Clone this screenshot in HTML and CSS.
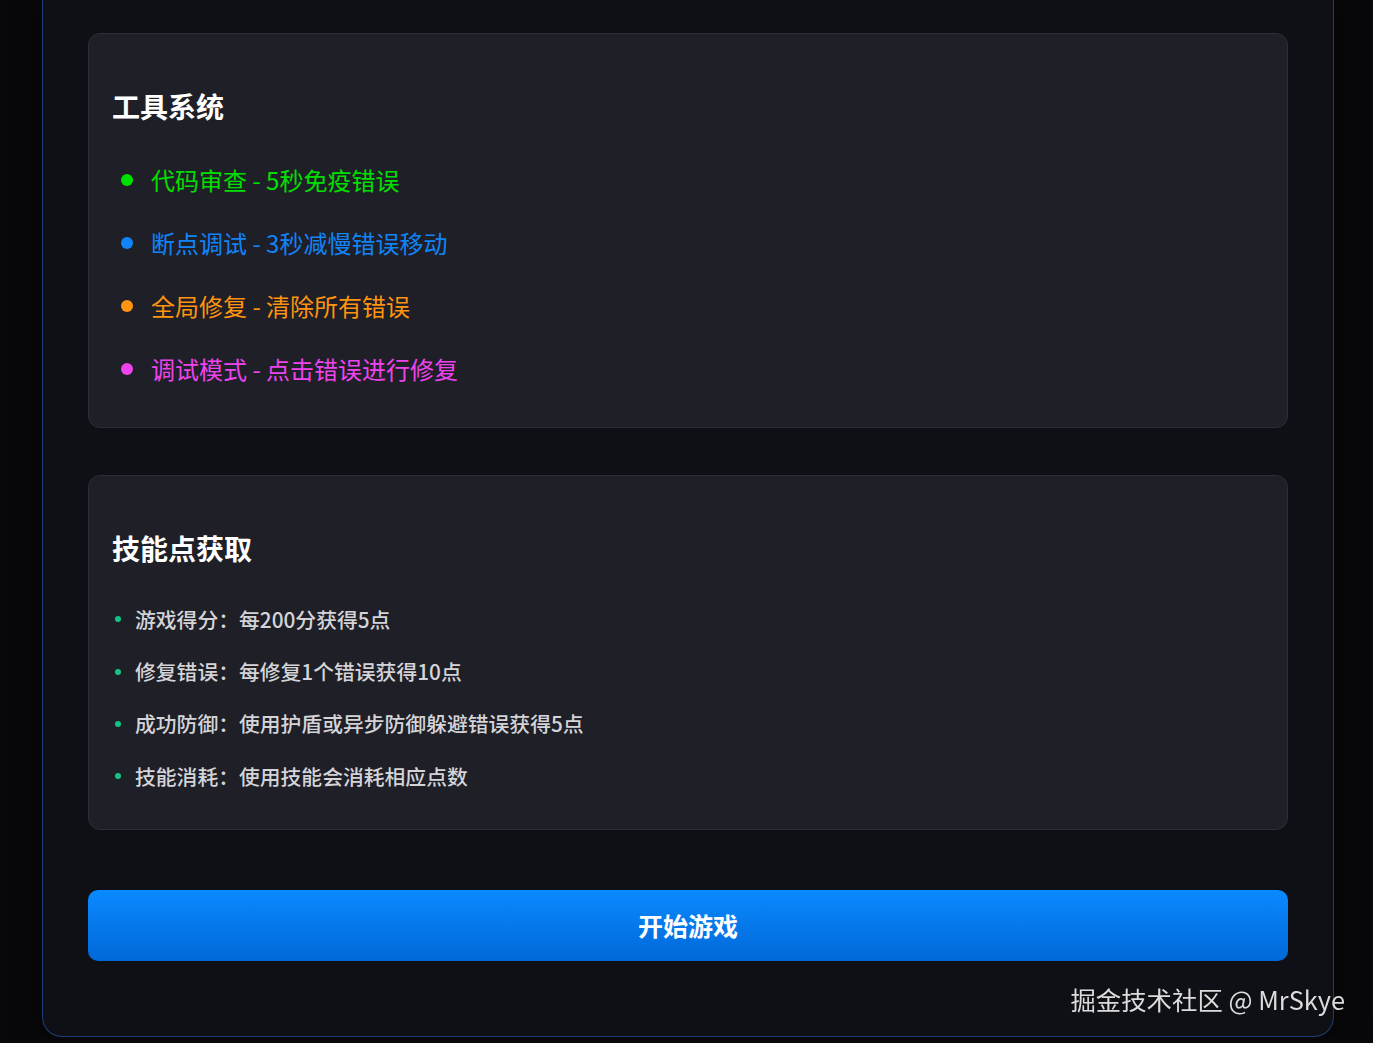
FILE: index.html
```html
<!DOCTYPE html>
<html lang="zh-CN">
<head>
    <meta charset="UTF-8">
    <meta name="viewport" content="width=device-width, initial-scale=1.0">
    <title>调试大作战</title>

    <link rel="stylesheet" href="styles.css">
</head>
<body>
    <div class="panel">
        <div class="card">
            <h3>工具系统</h3>
            <ul class="tools">
                <li class="green">代码审查 - 5秒免疫错误</li>
                <li class="blue">断点调试 - 3秒减慢错误移动</li>
                <li class="orange">全局修复 - 清除所有错误</li>
                <li class="pink">调试模式 - 点击错误进行修复</li>
            </ul>
        </div>

        <div class="card">
            <h3>技能点获取</h3>
            <ul class="points">
                <li>游戏得分：每200分获得5点</li>
                <li>修复错误：每修复1个错误获得10点</li>
                <li>成功防御：使用护盾或异步防御躲避错误获得5点</li>
                <li>技能消耗：使用技能会消耗相应点数</li>
            </ul>
        </div>

        <button class="start">开始游戏</button>
    </div>

    <div class="mark">掘金技术社区 @ MrSkye</div>
</body>
</html>
```

FILE: styles.css
```css
body {
    margin: 0;
    font-family: "Noto Sans CJK SC", "Noto Sans", sans-serif;
    background-color: #08080a;
    overflow: hidden;
}

.panel {
    width: 1200px;
    margin-left: 42px;
    padding: 33px 45px 75px;
    background-color: #0f1016;
    border: 1px solid rgba(40, 120, 230, 0.45);
    border-top: none;
    border-radius: 0 0 20px 20px;
    box-shadow: 0 0 30px rgba(0, 0, 0, 0.5);
}

.card {
    background-color: #1e1f27;
    border: 1px solid #2c2d36;
    border-radius: 12px;
    padding: 24px 23px 27px;
    margin-bottom: 47px;
}

.card h3 {
    margin: 27px 0 21px;
    font-size: 28px;
    line-height: 42px;
    font-weight: bold;
    color: #ffffff;
}

.card ul {
    list-style: none;
    margin: 0;
    padding: 0;
}

.tools li {
    display: flex;
    align-items: center;
    gap: 18px;
    padding: 13.5px 0 13.5px 9px;
    font-size: 24px;
    line-height: 36px;
}

.tools li::before {
    content: "";
    width: 12px;
    height: 12px;
    border-radius: 50%;
    background-color: currentColor;
}

.green { color: #00e000; }
.blue { color: #1184f8; }
.orange { color: #ff9410; }
.pink { color: #ee44ee; }

.card + .card {
    margin-bottom: 0;
    padding-bottom: 26px;
}

.card ul.points {
    padding-top: 3px;
}

.points li {
    display: flex;
    align-items: center;
    gap: 14px;
    padding: 10.6px 0 10.6px 3px;
    font-size: 20.8px;
    line-height: 31.2px;
    font-weight: 500;
    color: #d4d4d8;
}

.points li::before {
    content: "";
    width: 6px;
    height: 6px;
    border-radius: 50%;
    background-color: #10c584;
}

.start {
    display: block;
    width: 100%;
    margin-top: 60px;
    padding: 17px;
    border: none;
    border-radius: 10px;
    background: linear-gradient(to bottom, #0a8aff, #0068d8);
    color: #ffffff;
    font-family: inherit;
    font-size: 25px;
    line-height: 37px;
    font-weight: bold;
    cursor: pointer;
}

.mark {
    position: fixed;
    right: 28px;
    bottom: 25px;
    font-size: 25.4px;
    line-height: 38px;
    color: #dcdcdc;
}
```
